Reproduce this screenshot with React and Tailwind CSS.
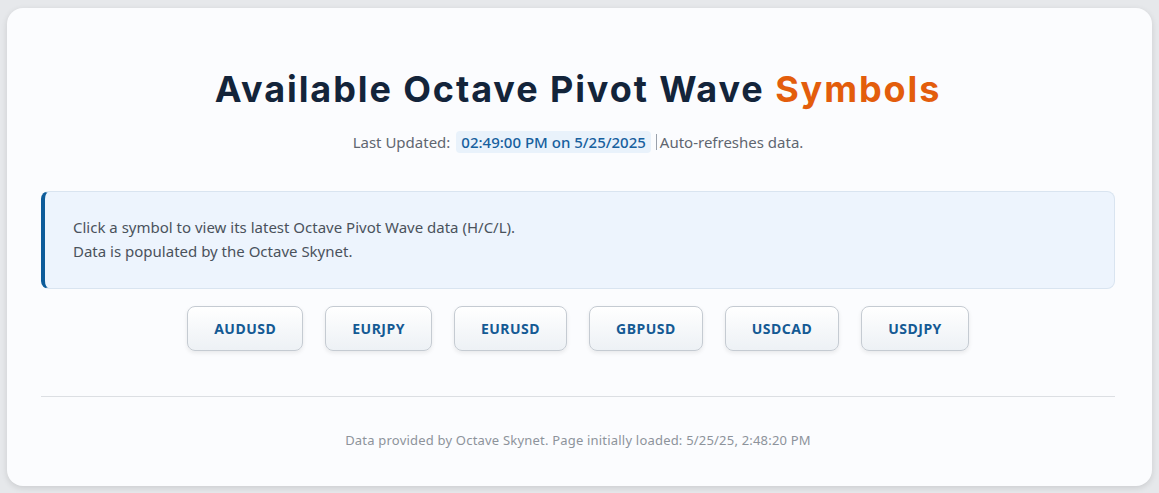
import React from 'react';

const symbols = ['AUDUSD', 'EURJPY', 'EURUSD', 'GBPUSD', 'USDCAD', 'USDJPY'];

const App = () => {
  return (
    <div className="min-h-[493px] bg-[#e6e8eb] px-[7px] pt-[8px] pb-[7px] font-['Noto_Sans',sans-serif]">
      <div className="bg-[#fbfcfe] rounded-[16px] shadow-[0_2px_6px_rgba(0,0,0,0.12)] pl-[34px] pr-[37px] pt-[57px] pb-[37px]">
        <h1 className="text-center text-[36px] leading-[48px] font-bold tracking-[1.9px] text-[#13243a] font-['Inter',sans-serif]">
          Available Octave Pivot Wave <span className="text-[#e35d0c]">Symbols</span>
        </h1>

        <div className="mt-[18px] flex items-center justify-center text-[15px] text-[#5f6670]">
          <span>Last Updated:</span>
          <span className="ml-[6px] px-[5px] h-[22px] flex items-center rounded-[4px] bg-[#e9f2fb] text-[#17609e] font-medium">
            02:49:00 PM on 5/25/2025
          </span>
          <span className="ml-[5px] border-l border-[#9aa1ab] pl-[3px] leading-[16px]">Auto-refreshes data.</span>
        </div>

        <div className="mt-[37px] rounded-[8px] border border-[#d9e4f0] border-l-[4px] border-l-[#0d5c9a] bg-[#edf4fd] pl-[28px] pr-6 pt-[23px] pb-[25px] text-[15px] leading-[24px] text-[#4a525c]">
          <p>Click a symbol to view its latest Octave Pivot Wave data (H/C/L).</p>
          <p>Data is populated by the Octave Skynet.</p>
        </div>

        <div className="mt-[17px] flex justify-center gap-[22px]">
          {symbols.map((s) => (
            <button
              key={s}
              className="h-[45px] px-[26px] rounded-[8px] border border-[#c5cbd2] bg-gradient-to-b from-[#ffffff] to-[#edf1f5] shadow-[0_2px_4px_rgba(0,0,0,0.08)] text-[14px] font-bold tracking-[0.5px] text-[#145a94]"
            >
              {s}
            </button>
          ))}
        </div>

        <div className="mt-[45px] border-t border-[#dcdfe3]"></div>

        <p className="mt-[34px] text-center text-[13px] leading-[18px] text-[#8d939b] tracking-[0.2px]">
          Data provided by Octave Skynet. Page initially loaded: 5/25/25, 2:48:20 PM
        </p>
      </div>
    </div>
  );
};

export default App;
